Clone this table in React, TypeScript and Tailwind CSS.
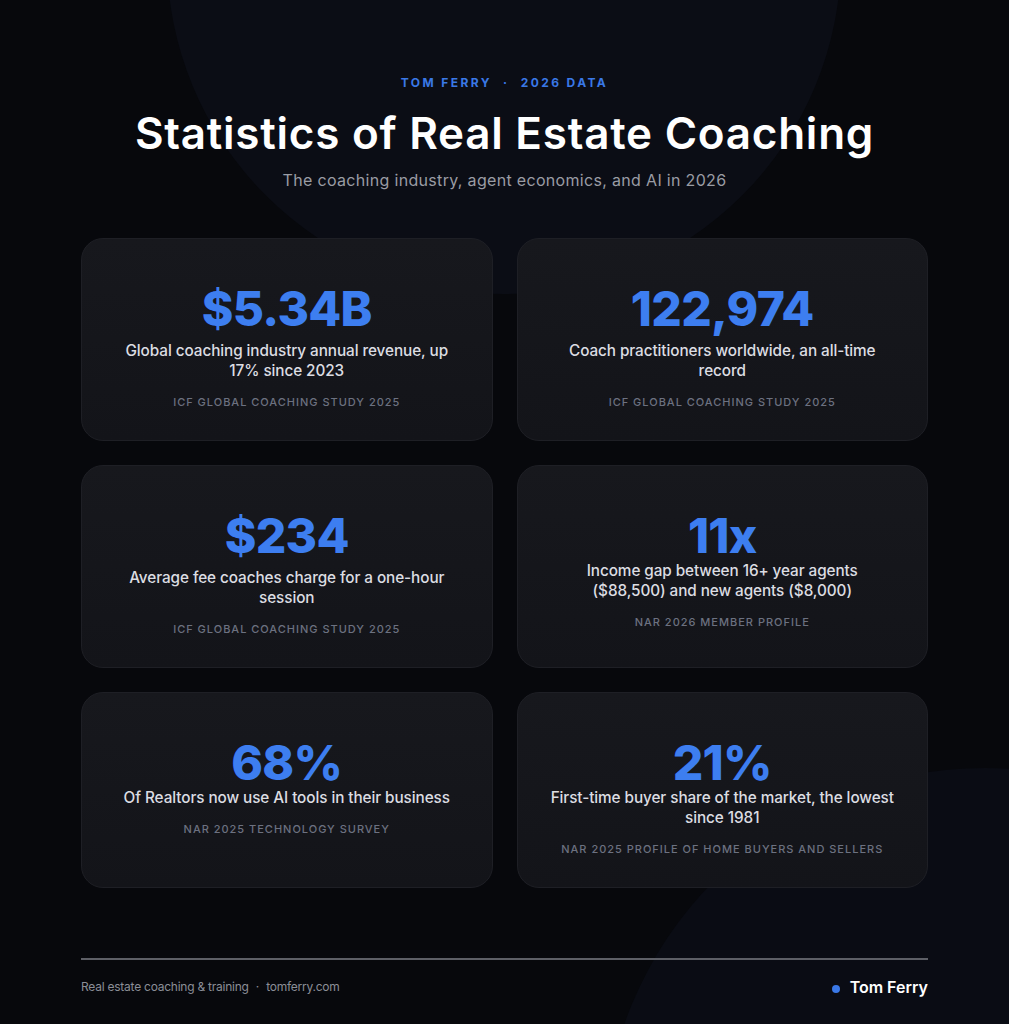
import React from "react";

type Stat = { value: string; lines: string[]; source: string; tall?: boolean };

const stats: Stat[] = [
  { value: "$5.34B", lines: ["Global coaching industry annual revenue, up", "17% since 2023"], source: "ICF Global Coaching Study 2025", tall: true },
  { value: "122,974", lines: ["Coach practitioners worldwide, an all-time", "record"], source: "ICF Global Coaching Study 2025", tall: true },
  { value: "$234", lines: ["Average fee coaches charge for a one-hour", "session"], source: "ICF Global Coaching Study 2025", tall: true },
  { value: "11x", lines: ["Income gap between 16+ year agents", "($88,500) and new agents ($8,000)"], source: "NAR 2026 Member Profile" },
  { value: "68%", lines: ["Of Realtors now use AI tools in their business"], source: "NAR 2025 Technology Survey" },
  { value: "21%", lines: ["First-time buyer share of the market, the lowest", "since 1981"], source: "NAR 2025 Profile of Home Buyers and Sellers" },
];

function Card({ s }: { s: Stat }) {
  return (
    <div className="flex flex-col items-center rounded-[22px] border border-[#1e1f25] bg-gradient-to-b from-[#17181d] to-[#131419] px-6 pt-[46px] pb-[30px] text-center">
      <div className="text-[48px] leading-[48px] font-extrabold tracking-[-0.015em] text-[#3d7ef0]">{s.value}</div>
      <div className={`${s.tall ? "mt-[8px]" : "mt-[1px]"} text-[15.3px] leading-[20px] font-medium tracking-[-0.005em] text-[#dcdde2]`}>
        {s.lines.map((l, i) => (
          <div key={i} className="whitespace-nowrap">{l}</div>
        ))}
      </div>
      <div className="mt-[13px] text-[11px] leading-[16px] font-medium uppercase tracking-[0.09em] text-[#6c7180]">{s.source}</div>
    </div>
  );
}

export default function App() {
  return (
    <div
      className="relative w-[1009px] h-[1024px] overflow-hidden bg-[#07080c] text-white"
      style={{ fontFamily: "Inter, 'Noto Sans', sans-serif" }}
    >
      <div className="pointer-events-none absolute left-[167px] top-[-380px] h-[674px] w-[674px] rounded-full bg-[#0b0d15]" />
      <div className="pointer-events-none absolute left-[603px] top-[768px] h-[764px] w-[764px] rounded-full bg-[#0a0c14]" />

      <div className="relative flex flex-col items-center px-[81px] pt-[75px]">
        <div className="text-[12px] leading-[16px] font-bold uppercase tracking-[0.2em] text-[#3a78e6]">
          Tom Ferry <span className="mx-[6px]">·</span> 2026 Data
        </div>
        <h1 className="mt-[17px] text-[44px] leading-[50px] font-semibold tracking-[0.75px] text-white">
          Statistics of Real Estate Coaching
        </h1>
        <p className="mt-[10px] text-[16px] leading-[24px] tracking-[0.02em] text-[#9a9ca4]">
          The coaching industry, agent economics, and AI in 2026
        </p>

        <div className="mt-[46px] grid w-full grid-cols-2 gap-6">
          {stats.map((s, i) => (
            <Card key={i} s={s} />
          ))}
        </div>

        <div className="mt-[70px] h-[2px] w-full bg-[#5d5f66]" />
        <div className="mt-[17px] flex w-full items-center justify-between">
          <div className="text-[12px] leading-[20px] tracking-[-0.02em] text-[#8b8e97]">
            Real estate coaching &amp; training <span className="mx-[4px]">·</span> tomferry.com
          </div>
          <div className="flex items-center gap-[10px]">
            <span className="mt-[4px] h-[8px] w-[8px] rounded-full bg-[#3a78e6]" />
            <span className="text-[16px] leading-[20px] font-semibold text-white">Tom Ferry</span>
          </div>
        </div>
      </div>
    </div>
  );
}
